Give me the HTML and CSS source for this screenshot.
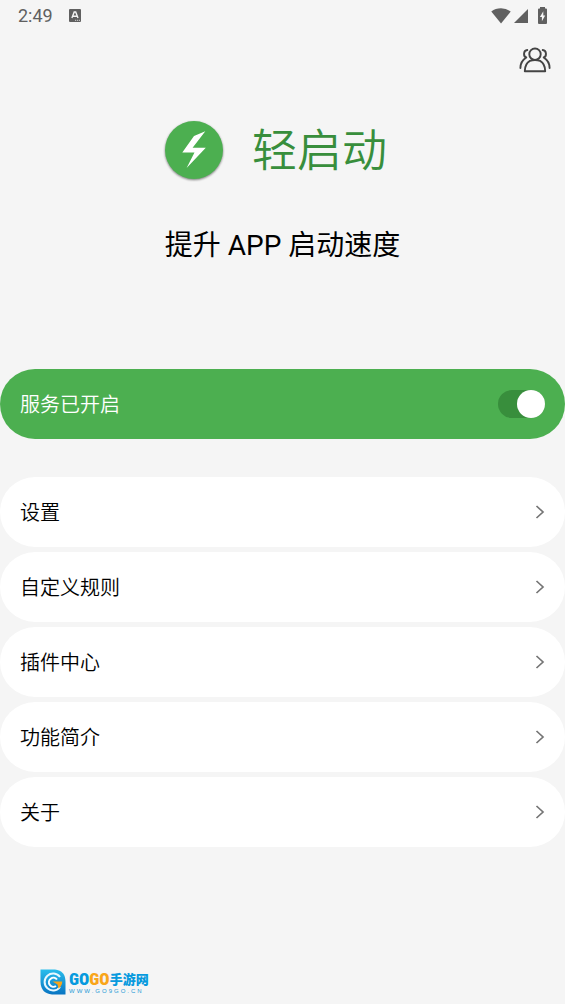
FILE: index.html
```html
<!DOCTYPE html>
<html lang="zh-CN">
<head>
<meta charset="utf-8">
<meta name="viewport" content="width=device-width, initial-scale=1">
<title>轻启动</title>
<link rel="stylesheet" href="styles.css">
</head>
<body>
<div class="screen">
  <div class="status-bar">
    <time class="clock">2:49</time>
    <svg class="notice" width="12" height="13" viewBox="0 0 12 13" aria-hidden="true">
      <rect width="12" height="13" rx="1" fill="#606060"/>
      <path d="M2.9 9 5.2 3h1.5L9 9M4 7.2h4" fill="none" stroke="#f5f5f5" stroke-width="1.4"/>
      <path d="M6 11.3h1.2M8 11.3h1.2M10 11.3h1" stroke="#d5d5d5" stroke-width="1"/>
    </svg>
    <div class="indicators">
      <svg width="20" height="16" viewBox="0 0 20 16" aria-hidden="true"><path d="M10 15.4 0.3 3.6Q4.5 0.3 10 0.3t9.7 3.3z" fill="#606060"/></svg>
      <svg width="14" height="14" viewBox="0 0 14 14" aria-hidden="true"><path d="M14 0v14H0z" fill="#606060"/></svg>
      <svg class="battery" width="9" height="17" viewBox="0 0 9 17" aria-hidden="true">
        <path d="M2 0h5v1.500H8q1 0 1 1V16q0 1-1 1H1q-1 0-1-1V2.500q0-1 1-1h1z" fill="#606060"/>
        <path d="M5.300 4.300 1.900 10h2v4.300L7.200 8.400H5.300z" fill="#f5f5f5"/>
      </svg>
    </div>
  </div>

  <header class="toolbar">
    <button class="icon-button" type="button" aria-label="社区">
      <svg width="32" height="28" viewBox="0 0 32 28" fill="none" stroke="#444" stroke-width="1.900" stroke-linecap="round" stroke-linejoin="round" aria-hidden="true">
        <circle cx="16" cy="8.200" r="5.700"/>
        <path d="M10.900 14.900C8 16.600 5.800 20 5.800 25.200h20.400c0-5.200-2.200-8.600-5.100-10.300q-5.100-1.700-10.200 0z"/>
        <path d="M8.300 4C4.300 4.500 4 10.300 7.300 11.500 3.300 14 1.400 17 1.400 22M23.700 4c4 .5 4.300 6.300 1 7.500 4 2.500 5.900 5.500 5.900 10.500"/>
      </svg>
    </button>
  </header>

  <main>
    <section class="hero">
      <div class="brand">
        <svg class="logo" width="60" height="60" viewBox="0 0 60 60" aria-hidden="true">
          <circle cx="30" cy="30" r="29" fill="#4caf50"/>
          <path d="M41.300 11.200 30 16 18.300 32.600h12.200L22.600 48 41.800 27.700H28.600z" fill="#fff"/>
        </svg>
        <h1 class="title">轻启动</h1>
      </div>
      <p class="slogan">提升 APP 启动速度</p>
    </section>

    <label class="row service">
      <span>服务已开启</span>
      <input class="switch" type="checkbox" role="switch" checked>
    </label>

    <nav class="menu">
      <a class="row" href="#settings">设置<svg class="chevron" viewBox="0 0 10 16"><path d="m1.500 2 6.500 6-6.500 6"/></svg></a>
      <a class="row" href="#rules">自定义规则<svg class="chevron" viewBox="0 0 10 16"><path d="m1.500 2 6.500 6-6.500 6"/></svg></a>
      <a class="row" href="#plugins">插件中心<svg class="chevron" viewBox="0 0 10 16"><path d="m1.500 2 6.500 6-6.500 6"/></svg></a>
      <a class="row" href="#features">功能简介<svg class="chevron" viewBox="0 0 10 16"><path d="m1.500 2 6.500 6-6.500 6"/></svg></a>
      <a class="row" href="#about">关于<svg class="chevron" viewBox="0 0 10 16"><path d="m1.500 2 6.500 6-6.500 6"/></svg></a>
    </nav>
  </main>

  <footer class="source">
    <svg width="26" height="26" viewBox="0 0 26 26" aria-hidden="true">
      <defs><linearGradient id="leaf" x2="0" y2="1"><stop stop-color="#29bdec"/><stop offset="1" stop-color="#0874c2"/></linearGradient></defs>
      <path d="M0.500 0.500H15Q25.500 1.500 25.500 13v12.500H12Q1 24.500 0.500 13z" fill="url(#leaf)"/>
      <path d="M20 8A8.500 8.500 0 1 0 20 18" fill="none" stroke="#e8f8ff" stroke-width="2"/>
      <path d="M17 10.500A4.500 4.500 0 1 0 16 17" fill="none" stroke="#fff" stroke-width="2"/>
      <path d="M12.500 12.600h9.800q-.3 4.500-3.800 7l-1-4z" fill="#f8a51b"/>
    </svg>
    <div class="source-text">
      <div class="source-name"><span class="latin blue">GO</span><span class="latin orange">GO</span><span class="blue">手游网</span></div>
      <div class="source-url">WWW.GO9GO.CN</div>
    </div>
  </footer>
</div>
</body>
</html>
```
FILE: styles.css
```css
* {
  box-sizing: border-box;
}

body {
  margin: 0;
  background: #f5f5f5;
  color: #000;
  font-family: "Noto Sans CJK SC", sans-serif;
  font-weight: 350;
}

.screen {
  display: flex;
  flex-direction: column;
  min-height: 100vh;
}

.status-bar {
  display: flex;
  align-items: center;
  height: 31px;
  padding: 0 18px;
  color: #606060;
}

.clock {
  font-family: Roboto, sans-serif;
  font-size: 18px;
  font-weight: 400;
  line-height: 31px;
}

.notice {
  margin-left: 16px;
}

.indicators {
  display: flex;
  align-items: center;
  gap: 3px;
  margin-left: auto;
}

.battery {
  margin-left: 7px;
}

.toolbar {
  display: flex;
  justify-content: flex-end;
  padding: 15px 14px;
}

.icon-button {
  display: flex;
  padding: 0;
  border: 0;
  background: none;
}

.hero {
  display: flex;
  flex-direction: column;
  align-items: center;
  gap: 44px;
  padding: 29px 0 103px;
}

.brand {
  display: flex;
  align-items: center;
  gap: 28px;
  padding-right: 14px;
}

.brand,
.slogan {
  margin: 0 auto;
}

.logo {
  border-radius: 50%;
  filter: drop-shadow(0 1px 1px rgb(0 0 0 / 50%));
}

.title {
  margin: 0;
  padding-bottom: 4px;
  color: #388e3c;
  font-size: 45px;
  font-weight: 350;
  line-height: 60px;
}

.slogan {
  font-family: Roboto, "Noto Sans CJK SC", sans-serif;
  font-size: 28px;
  font-weight: 400;
  line-height: 40px;
}

.row {
  display: flex;
  align-items: center;
  justify-content: space-between;
  height: 70px;
  padding: 0 20px;
  border-radius: 35px;
  background: #fff;
  color: #000;
  font-size: 20px;
  line-height: 30px;
  text-decoration: none;
}

.service {
  background: #4caf50;
  color: #fff;
}

.switch {
  display: flex;
  justify-content: flex-end;
  width: 47px;
  height: 28px;
  margin: 0;
  border-radius: 14px;
  background: #388e3c;
  appearance: none;
}

.switch::before {
  content: "";
  width: 28px;
  height: 28px;
  border-radius: 50%;
  background: #fff;
}

.switch:not(:checked) {
  justify-content: flex-start;
}

.menu {
  display: grid;
  gap: 5px;
  margin-top: 38px;
}

.chevron {
  width: 10px;
  height: 16px;
  fill: none;
  stroke: #757575;
  stroke-width: 1.7;
}

.source {
  display: flex;
  align-items: center;
  gap: 3px;
  margin-top: auto;
  padding: 0 40px 9px;
}

.source-name {
  display: flex;
  align-items: center;
  height: 19px;
  font-size: 13px;
  font-weight: 900;
}

.latin {
  font-family: "Roboto Condensed", "Liberation Sans Narrow", Roboto, sans-serif;
  font-size: 17px;
}

.blue {
  color: #079ade;
}

.orange {
  color: #f9a51a;
}

.source-url {
  color: #2599d5;
  font-family: "Liberation Sans", sans-serif;
  font-size: 6px;
  font-weight: 400;
  letter-spacing: 2px;
  line-height: 7px;
}
```
